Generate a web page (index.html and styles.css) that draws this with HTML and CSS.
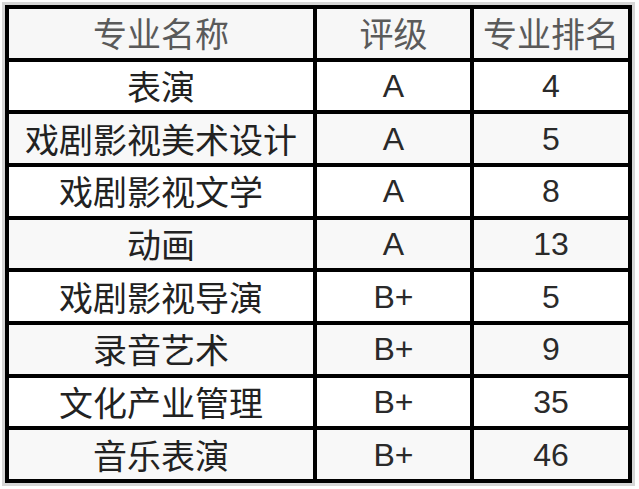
FILE: index.html
```html
<!DOCTYPE html>
<html lang="zh-CN">
<head>
<meta charset="utf-8">
<title>专业排名</title>
<link rel="stylesheet" href="styles.css">
</head>
<body>
<div class="frame">
<table class="rank">
  <thead>
    <tr class="head"><th class="c1">专业名称</th><th class="c2">评级</th><th class="c3">专业排名</th></tr>
  </thead>
  <tbody>
    <tr><td class="c1">表演</td><td class="c2 lat">A</td><td class="c3 lat">4</td></tr>
    <tr class="alt"><td class="c1">戏剧影视美术设计</td><td class="c2 lat">A</td><td class="c3 lat">5</td></tr>
    <tr><td class="c1">戏剧影视文学</td><td class="c2 lat">A</td><td class="c3 lat">8</td></tr>
    <tr class="alt"><td class="c1">动画</td><td class="c2 lat">A</td><td class="c3 lat">13</td></tr>
    <tr><td class="c1">戏剧影视导演</td><td class="c2 lat">B+</td><td class="c3 lat">5</td></tr>
    <tr class="alt"><td class="c1">录音艺术</td><td class="c2 lat">B+</td><td class="c3 lat">9</td></tr>
    <tr><td class="c1">文化产业管理</td><td class="c2 lat">B+</td><td class="c3 lat">35</td></tr>
    <tr class="alt"><td class="c1">音乐表演</td><td class="c2 lat">B+</td><td class="c3 lat">46</td></tr>
  </tbody>
</table>
</div>
</body>
</html>
```
FILE: styles.css
```css
html, body {
  margin: 0;
  padding: 0;
  background: #ffffff;
}
.frame {
  display: inline-block;
  margin: 2px 0 0 2px;
  border: 3px solid #d6d6d6;
}
.rank {
  border-collapse: separate;
  border-spacing: 4px;
  background: #000000;
  font-family: "Noto Sans CJK SC", "Noto Sans", sans-serif;
  font-size: 34px;
  color: #222222;
}
.rank th, .rank td {
  padding: 0;
  height: 48.67px;
  text-align: center;
  vertical-align: middle;
  background: #ffffff;
  font-weight: 400;
  line-height: 1;
}
.rank .c1 { width: 304px; }
.rank .c2 { width: 153px; }
.rank .c3 { width: 154px; }
.rank .head th {
  background: #f7f7f7;
  color: #5a5a5a;
}
.rank .alt td {
  background: #f8f8f8;
}
.rank .lat {
  font-family: "Liberation Sans", "Noto Sans", sans-serif;
  font-size: 32px;
  color: #2a2a2a;
}
```
